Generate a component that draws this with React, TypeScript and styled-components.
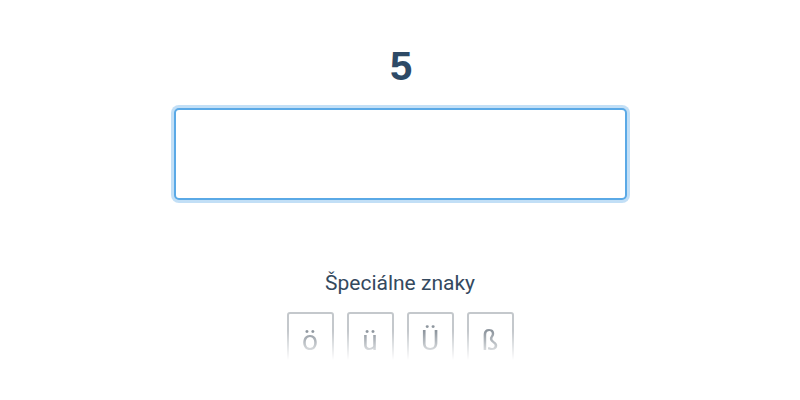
import styled, { createGlobalStyle } from 'styled-components';

const GlobalStyle = createGlobalStyle`
	body {
		margin: 0;
		background: #ffffff;
		font-family: Roboto, 'Liberation Sans', Arial, sans-serif;
	}
`;

const Page = styled.div`
	display: flex;
	flex-direction: column;
	align-items: center;
	padding-top: 42px;
`;

const Number = styled.h1`
	margin: 0 0 0 2px;
	font-family: 'Liberation Sans', Arial, sans-serif;
	font-size: 40px;
	line-height: 48px;
	font-weight: 700;
	color: #2e4a66;
`;

const Answer = styled.input`
	box-sizing: border-box;
	margin-top: 18px;
	width: 453px;
	height: 92px;
	border: 2px solid #5aa9e6;
	border-radius: 5px;
	box-shadow: 0 0 0 3px rgba(120, 185, 235, 0.45);
	outline: none;
	font-size: 28px;
	padding: 0 16px;
	background: #ffffff;
`;

const Label = styled.div`
	margin-top: 69px;
	font-size: 21px;
	line-height: 28px;
	color: #34495e;
`;

const Keys = styled.div`
	display: flex;
	gap: 13px;
	margin-top: 15px;
	height: 48px;
	overflow: hidden;
	-webkit-mask-image: linear-gradient(to bottom, #000 40%, transparent 100%);
	mask-image: linear-gradient(to bottom, #000 40%, transparent 100%);
`;

const Key = styled.button`
	box-sizing: border-box;
	width: 47px;
	height: 60px;
	border: 2px solid #c4c8cc;
	border-radius: 3px;
	background: #ffffff;
	color: #8e969e;
	font-family: Roboto, 'Liberation Sans', sans-serif;
	font-size: 28px;
	padding: 10px 0 0;
	display: flex;
	justify-content: center;
	align-items: flex-start;
	cursor: pointer;
`;

const chars = ['ö', 'ü', 'Ü', 'ß'];

const App = () => {
	return (
		<>
			<GlobalStyle />
			<Page>
				<Number>5</Number>
				<Answer type="text" autoFocus />
				<Label>Špeciálne znaky</Label>
				<Keys>
					{chars.map((c) => (
						<Key key={c}>{c}</Key>
					))}
				</Keys>
			</Page>
		</>
	);
};

export default App;
